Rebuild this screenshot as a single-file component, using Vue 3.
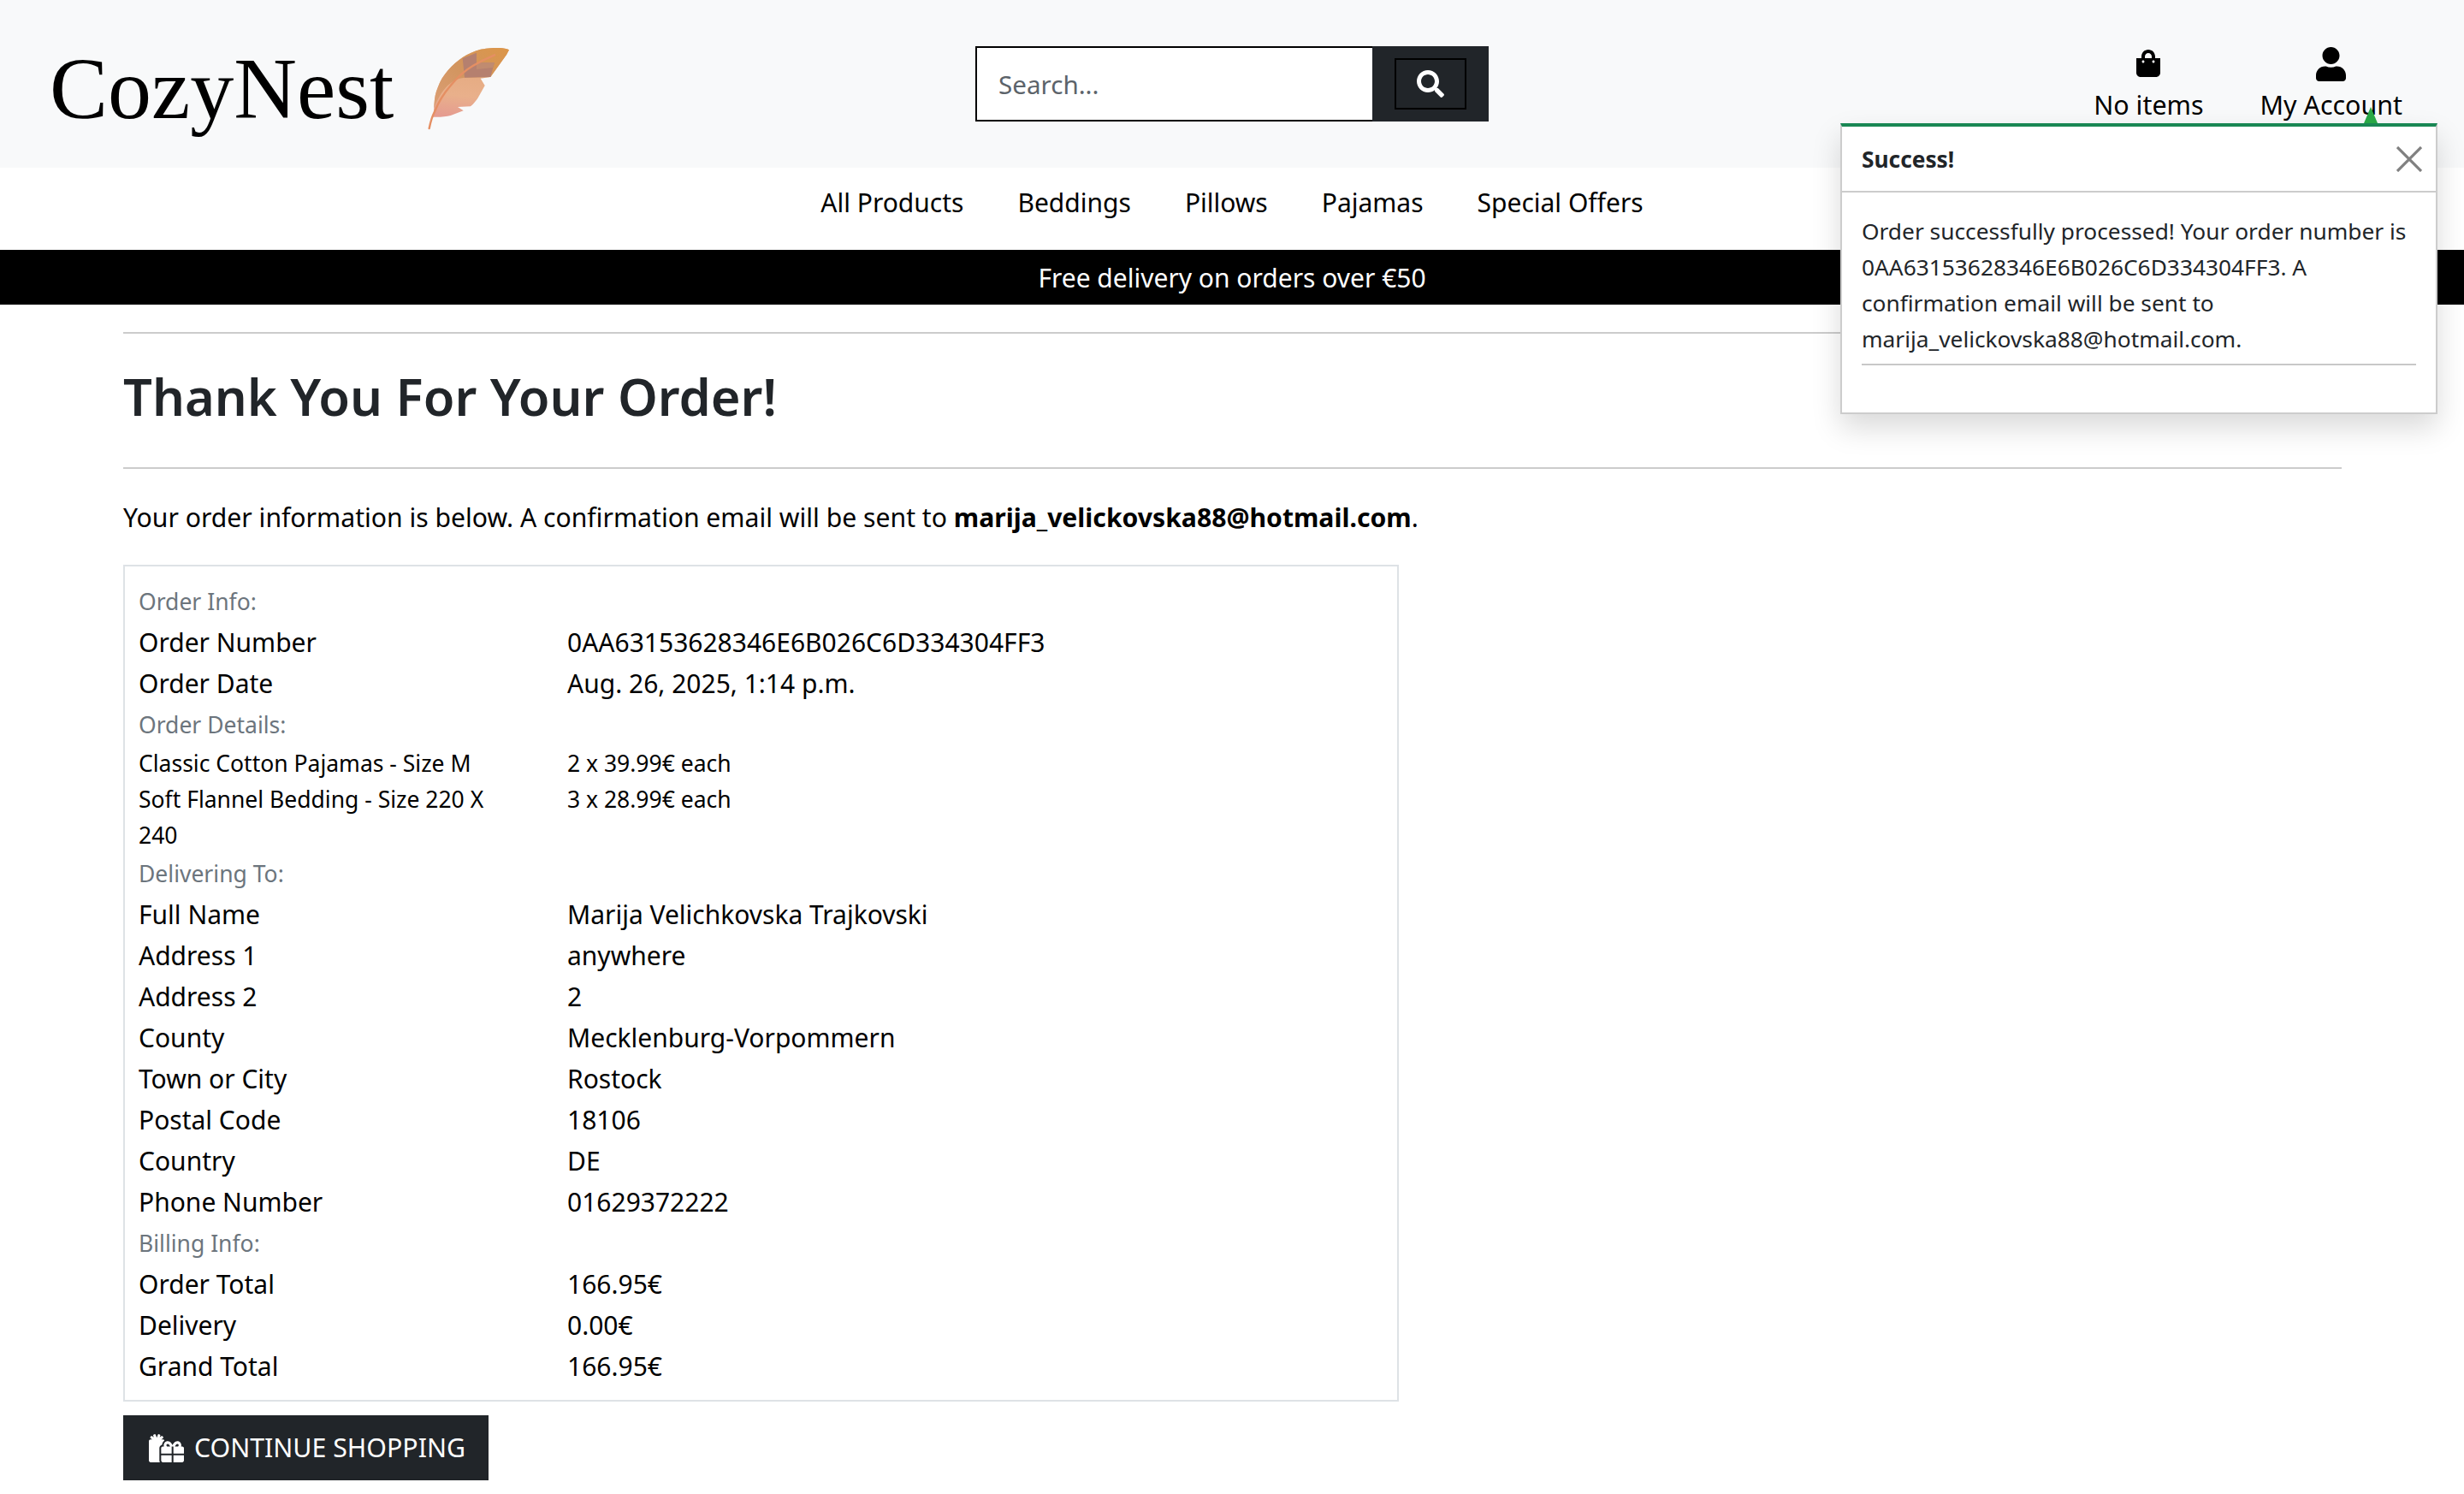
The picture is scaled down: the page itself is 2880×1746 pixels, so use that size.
<script setup>
const orderInfo = [
  ['Order Number', '0AA63153628346E6B026C6D334304FF3'],
  ['Order Date', 'Aug. 26, 2025, 1:14 p.m.']
]
const orderItems = [
  ['Classic Cotton Pajamas - Size M', '2 x 39.99€ each'],
  ['Soft Flannel Bedding - Size 220 X 240', '3 x 28.99€ each']
]
const delivery = [
  ['Full Name', 'Marija Velichkovska Trajkovski'],
  ['Address 1', 'anywhere'],
  ['Address 2', '2'],
  ['County', 'Mecklenburg-Vorpommern'],
  ['Town or City', 'Rostock'],
  ['Postal Code', '18106'],
  ['Country', 'DE'],
  ['Phone Number', '01629372222']
]
const billing = [
  ['Order Total', '166.95€'],
  ['Delivery', '0.00€'],
  ['Grand Total', '166.95€']
]
const navLinks = ['All Products', 'Beddings', 'Pillows', 'Pajamas', 'Special Offers']
</script>

<template>
  <div class="page">
    <header class="topbar">
      <div class="brand">
        <span class="logo">CozyNest</span>
        <svg class="feather" viewBox="0 0 95 96">
          <defs>
            <linearGradient id="body" x1="0.5" y1="0" x2="0.4" y2="1">
              <stop offset="0" stop-color="#e2a679" />
              <stop offset="0.7" stop-color="#e9b08b" />
              <stop offset="1" stop-color="#e59c90" />
            </linearGradient>
            <linearGradient id="upper" x1="1" y1="0" x2="0" y2="1">
              <stop offset="0" stop-color="#dc9648" />
              <stop offset="0.5" stop-color="#d2955f" />
              <stop offset="1" stop-color="#dc9f76" />
            </linearGradient>
          </defs>
          <path fill="url(#body)" d="M95 2.3 C90 0 84 -0.3 76.7 0 C68 0.5 62 1.5 56.7 3.3 C48 6.5 42 10 36.7 14 C30 19 25 24 20 30.7 C15 37 12.5 44 10 50.7 C8 57 7.5 64 7.3 70.7 L6 80.7 C14 81 21 80.5 26.7 79 L41.7 73.3 L35 69 L50 68.3 C54 65 56 62 58.3 59 L66.7 44 L61.7 35.7 L73.3 34 L92 8 Z" />
          <path fill="url(#upper)" d="M95 2.3 C90 0 84 -0.3 76.7 0 C68 0.5 62 1.5 56.7 3.3 C48 6.5 42 10 36.7 14 C30 19 25 24 20 30.7 C15 37 12.5 44 10 50.7 C8 57 7.5 64 7.3 70.7 C14 52 26 36 43 34.7 L73.3 34 L92 8 Z" />
          <path fill="#b5806f" d="M40.7 12.3 L57 5.7 L57 17.3 L78 17 L73.3 34 L43 34.7 Z" />
          <path fill="#c08b70" d="M57 17.3 L78 17 L76 23 L57 25 Z" />
          <path fill="none" stroke="#e58f63" stroke-width="2.4" stroke-linecap="round" d="M1.7 94 C3.5 85 5.5 79 8.3 74 C13 62 18 54 26.7 44 C34 35 42 27 53 20.7 C61 16 69 12 78 8.3" />
        </svg>
      </div>
      <form class="search" @submit.prevent>
        <input class="search-input" type="text" placeholder="Search..." />
        <div class="search-side">
          <button class="search-btn" type="button">
            <svg viewBox="0 0 512 512" class="search-icon"><path fill="#fff" d="M505 442.7L405.3 343c-4.5-4.5-10.6-7-17-7H372c27.6-35.3 44-79.7 44-128C416 93.1 322.9 0 208 0S0 93.1 0 208s93.1 208 208 208c48.3 0 92.7-16.4 128-44v16.3c0 6.4 2.5 12.5 7 17l99.7 99.7c9.4 9.4 24.6 9.4 33.9 0l28.3-28.3c9.4-9.4 9.4-24.6.1-34zM208 336c-70.7 0-128-57.2-128-128 0-70.7 57.2-128 128-128 70.7 0 128 57.2 128 128 0 70.7-57.2 128-128 128z" /></svg>
          </button>
        </div>
      </form>
      <div class="actions">
        <a class="action">
          <span class="action-icon">
            <svg viewBox="0 0 448 512" class="bag"><path d="M352 160v-32C352 57.42 294.579 0 224 0 153.42 0 96 57.42 96 128v32H0v272c0 44.183 35.817 80 80 80h288c44.183 0 80-35.817 80-80V160h-96zm-192-32c0-35.29 28.71-64 64-64s64 28.71 64 64v32H160v-32zm160 120c-13.255 0-24-10.745-24-24s10.745-24 24-24 24 10.745 24 24-10.745 24-24 24zm-192 0c-13.255 0-24-10.745-24-24s10.745-24 24-24 24 10.745 24 24-10.745 24-24 24z" /></svg>
          </span>
          <span>No items</span>
        </a>
        <a class="action">
          <span class="action-icon">
            <svg viewBox="0 0 448 512" class="user"><path d="M224 256c70.7 0 128-57.3 128-128S294.7 0 224 0 96 57.3 96 128s57.3 128 128 128zm89.6 32h-16.7c-22.2 10.2-46.9 16-72.9 16s-50.6-5.8-72.9-16h-16.7C60.2 288 0 348.2 0 422.4V464c0 26.5 21.5 48 48 48h352c26.5 0 48-21.5 48-48v-41.6c0-74.2-60.2-134.4-134.4-134.4z" /></svg>
          </span>
          <span>My Account</span>
        </a>
      </div>
    </header>

    <nav class="nav">
      <a v-for="link in navLinks" :key="link" class="nav-link">{{ link }}</a>
    </nav>

    <div class="banner">Free delivery on orders over €50</div>

    <main class="main">
      <hr class="rule" />
      <h1 class="title">Thank You For Your Order!</h1>
      <hr class="rule" />
      <p class="intro">
        Your order information is below. A confirmation email will be sent to
        <strong>marija_velickovska88@hotmail.com</strong>.
      </p>

      <section class="summary">
        <div class="section-label">Order Info:</div>
        <div v-for="row in orderInfo" :key="row[0]" class="row">
          <span>{{ row[0] }}</span>
          <span class="value">{{ row[1] }}</span>
        </div>

        <div class="section-label">Order Details:</div>
        <div v-for="row in orderItems" :key="row[0]" class="row row-small">
          <span class="item-name">{{ row[0] }}</span>
          <span class="value">{{ row[1] }}</span>
        </div>

        <div class="section-label">Delivering To:</div>
        <div v-for="row in delivery" :key="row[0]" class="row">
          <span>{{ row[0] }}</span>
          <span class="value">{{ row[1] }}</span>
        </div>

        <div class="section-label">Billing Info:</div>
        <div v-for="row in billing" :key="row[0]" class="row">
          <span>{{ row[0] }}</span>
          <span class="value">{{ row[1] }}</span>
        </div>
      </section>

      <a class="continue">
        <svg viewBox="0 0 640 512" class="gifts"><path fill="#fff" d="M240.6 194.1c1.9-30.8 17.3-61.2 44-79.8C279.4 103.5 268.7 96 256 96h-29.4l30.7-22c7.2-5.1 8.9-15.1 3.7-22.3l-9.3-13c-5.1-7.2-15.1-8.9-22.3-3.7l-32 22.9 11.5-30.6c3.1-8.3-1.1-17.5-9.4-20.6l-15-5.6c-8.3-3.1-17.5 1.1-20.6 9.4l-19.9 53-19.9-53.1C121 2.1 111.8-2.1 103.5 1l-15 5.6C80.2 9.7 76 19 79.2 27.2l11.5 30.6L58.6 35c-7.2-5.1-17.2-3.5-22.3 3.7l-9.3 13c-5.1 7.2-3.5 17.2 3.7 22.3l30.7 22H32c-17.7 0-32 14.3-32 32v352c0 17.7 14.3 32 32 32h168.9c-5.5-9.5-8.9-20.3-8.9-32V256c0-29.9 20.8-55 48.6-61.9zM224 480c0 17.7 14.3 32 32 32h160V384H224v96zm224 32h160c17.7 0 32-14.3 32-32v-96H448v128zm160-288h-20.4c2.6-7.6 4.4-15.5 4.4-23.8 0-35.5-27-72.2-72.1-72.2-48.1 0-75.9 47.7-87.9 75.3-12.1-27.6-39.9-75.3-87.9-75.3-45.1 0-72.1 36.7-72.1 72.2 0 8.3 1.7 16.2 4.4 23.8H256c-17.7 0-32 14.3-32 32v96h192V224h15.3l.7-.2.7.2H448v128h192v-96c0-17.7-14.3-32-32-32zm-272 0c-2.7-1.4-5.1-3-7.2-4.8-7.3-6.4-8.8-13.8-8.8-19 0-9.7 6.4-24.2 24.1-24.2 18.7 0 35.6 27.4 44.5 48H336zm199.2-4.8c-2.1 1.8-4.5 3.4-7.2 4.8h-52.6c8.8-20.3 25.8-48 44.5-48 17.7 0 24.1 14.5 24.1 24.2 0 5.2-1.5 12.6-8.8 19z" /></svg>
        <span>CONTINUE SHOPPING</span>
      </a>
    </main>

    <aside class="toast">
      <span class="toast-arrow"></span>
      <div class="toast-head">
        <strong>Success!</strong>
        <svg class="toast-close" viewBox="0 0 30 30"><path d="M1 1 L29 29 M29 1 L1 29" stroke="#808080" stroke-width="3.2" fill="none" /></svg>
      </div>
      <div class="toast-body">
        <p>Order successfully processed! Your order number is 0AA63153628346E6B026C6D334304FF3. A confirmation email will be sent to marija_velickovska88@hotmail.com.</p>
        <hr class="toast-rule" />
      </div>
    </aside>
  </div>
</template>

<style scoped>
.page {
  position: relative;
  min-height: 1746px;
  background: #fff;
  color: #000;
  font-family: "Noto Sans", "Open Sans", sans-serif;
  font-size: 30px;
  line-height: 48px;
  overflow: hidden;
}

.topbar {
  display: grid;
  grid-template-columns: 1140px 600px 1fr;
  align-items: center;
  height: 196px;
  background: #f8f9fa;
}

.brand {
  display: flex;
  align-items: center;
  padding: 11px 0 0 58px;
  gap: 40px;
}

.logo {
  font-family: "Liberation Serif", serif;
  font-size: 102px;
  line-height: 1;
  color: #000;
}

.feather {
  width: 95px;
  height: 96px;
  flex: none;
}

.search {
  display: flex;
  height: 88px;
}

.search-input {
  width: 464px;
  box-sizing: border-box;
  border: 2px solid #000;
  border-right: 0;
  padding: 2px 0 0 25px;
  font: inherit;
  font-size: 29.6px;
  background: #fff;
  outline: none;
}

.search-input::placeholder {
  color: #5c636a;
  opacity: 1;
}

.search-side {
  flex: 1;
  display: flex;
  align-items: center;
  justify-content: center;
  background: #212529;
}

.search-btn {
  width: 84px;
  height: 60px;
  display: flex;
  align-items: center;
  justify-content: center;
  border: 2px solid #000;
  background: #212529;
  padding: 0;
}

.search-icon {
  width: 32px;
  height: 32px;
}

.actions {
  display: flex;
  justify-content: flex-end;
  gap: 66px;
  padding-right: 72px;
  align-self: start;
  padding-top: 52px;
  font-size: 30.4px;
}

.action {
  display: flex;
  flex-direction: column;
  align-items: center;
}

.action-icon {
  height: 47px;
  display: flex;
  align-items: flex-end;
  justify-content: center;
}

.bag {
  width: 28px;
  height: 32px;
  margin-bottom: 9px;
}

.user {
  width: 35px;
  height: 40px;
  margin-bottom: 4px;
}

.nav {
  display: flex;
  justify-content: center;
  align-items: center;
  gap: 63px;
  height: 96px;
  box-sizing: border-box;
  padding-bottom: 15px;
  background: #fff;
}

.nav-link {
  color: #000;
}

.banner {
  height: 64px;
  background: #000;
  color: #fff;
  text-align: center;
  line-height: 66px;
}

.main {
  padding: 32px 143px 0 144px;
}

.rule {
  margin: 0;
  border: 0;
  height: 2px;
  background: #ccc;
}

.title {
  margin: 0;
  height: 156px;
  box-sizing: border-box;
  padding-bottom: 10px;
  display: flex;
  align-items: center;
  font-size: 59.6px;
  line-height: 1.2;
  font-weight: 600;
  color: #212529;
}

.intro {
  margin: 33px 0 31px;
  font-size: 30.15px;
  line-height: 48px;
}

.summary {
  width: 1491px;
  box-sizing: border-box;
  border: 2px solid #dee2e6;
  padding: 17px 16px 15px;
}

.section-label {
  height: 48px;
  line-height: 49px;
  font-size: 26.5px;
  color: #6c757d;
}

.row {
  display: grid;
  grid-template-columns: 501px 1fr;
}

.row-small {
  font-size: 26.5px;
  line-height: 42px;
}

.item-name {
  padding-right: 60px;
}

.continue {
  display: inline-flex;
  align-items: center;
  gap: 12px;
  height: 76px;
  margin-top: 16px;
  padding: 0 27px 0 30px;
  background: #212529;
  color: #fff;
  font-size: 30.3px;
}

.gifts {
  width: 41px;
  height: 33px;
}

.toast {
  position: absolute;
  top: 144px;
  left: 2151px;
  width: 698px;
  height: 340px;
  box-sizing: border-box;
  background: #fff;
  border: 2px solid #ccc;
  border-top: 4px solid #198754;
  box-shadow: 0 16px 32px rgba(0, 0, 0, 0.15);
  font-size: 26.3px;
  line-height: 42px;
  color: #212529;
}

.toast-arrow {
  position: absolute;
  top: -23px;
  left: 610px;
  width: 0;
  height: 0;
  border-left: 8px solid transparent;
  border-right: 8px solid transparent;
  border-bottom: 19px solid #28a745;
}

.toast-head {
  height: 75px;
  display: flex;
  align-items: center;
  justify-content: space-between;
  padding: 0 16px 0 23px;
  border-bottom: 2px solid #ccc;
}

.toast-close {
  width: 30px;
  height: 30px;
}

.toast-body {
  padding: 24px 23px 0;
}

.toast-body p {
  margin: 0;
}

.toast-rule {
  margin: 8px 0 0;
  border: 0;
  height: 2px;
  background: #c8c8c8;
}
</style>

<style>
body {
  background: #fff;
}
</style>
